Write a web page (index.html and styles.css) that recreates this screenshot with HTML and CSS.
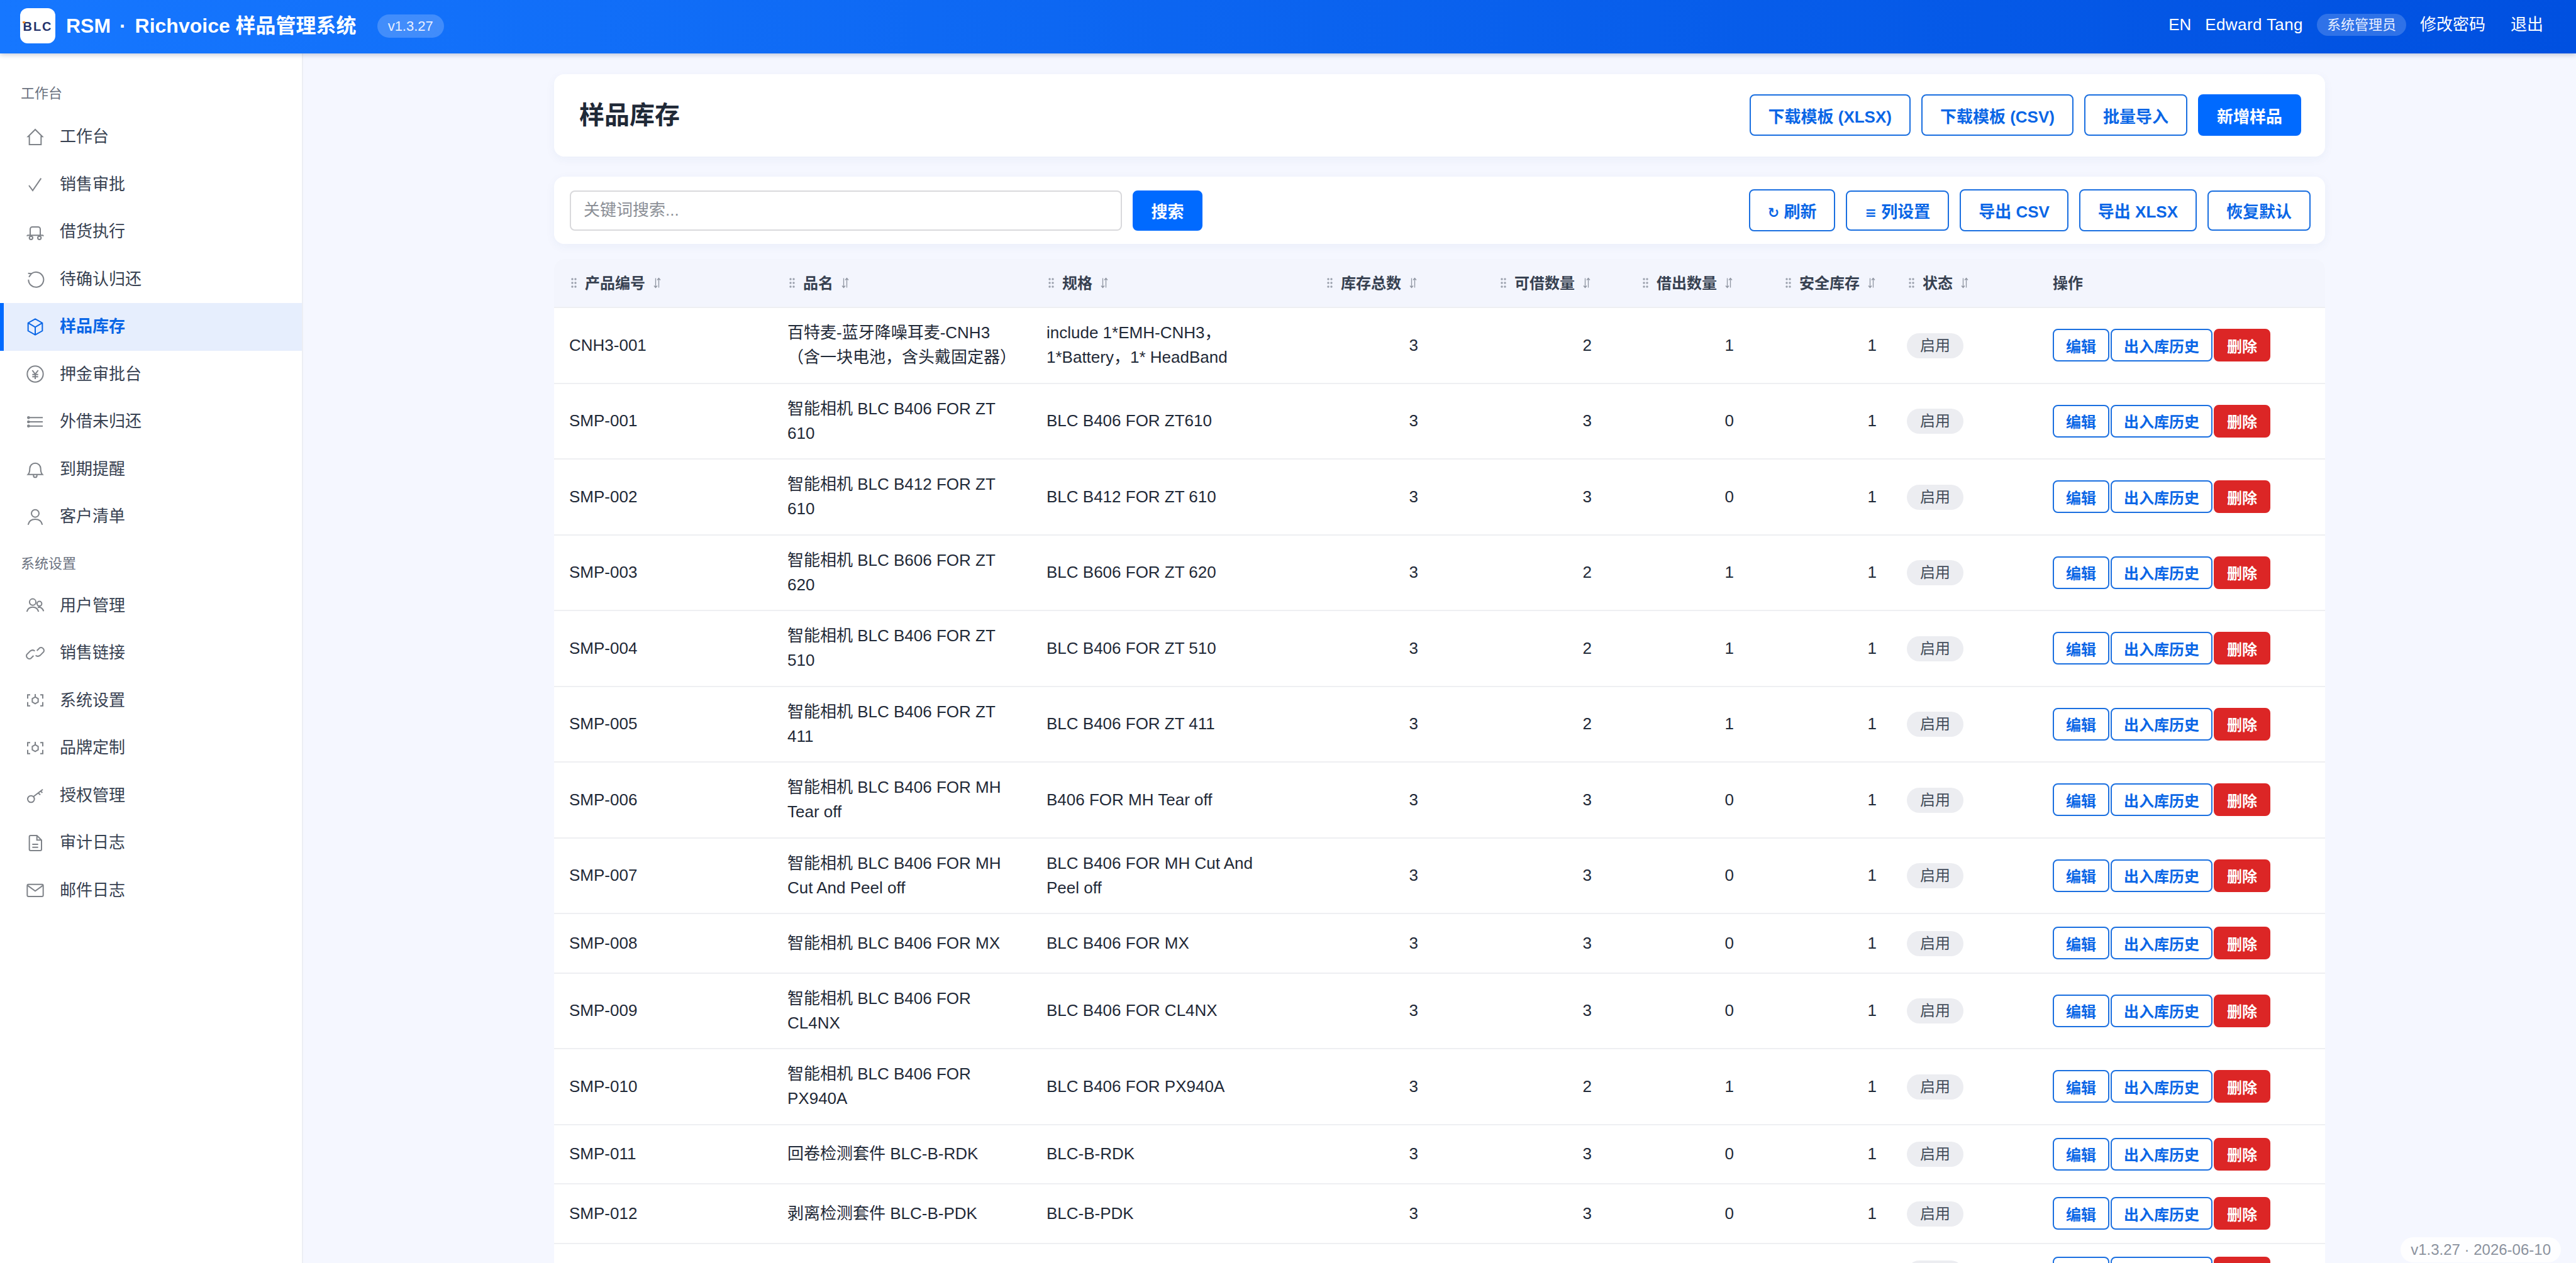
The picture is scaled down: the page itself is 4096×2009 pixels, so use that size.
FILE: index.html
```html
<!DOCTYPE html>
<html lang="zh-CN">
  <head>
    <meta charset="UTF-8" />
    <meta name="viewport" content="width=device-width, initial-scale=1.0" />
    <title>样品库存 - RSM · Richvoice 样品管理系统</title>
    <link rel="stylesheet" href="styles.css">
  </head>
  <body>
    <svg class="icon-defs" aria-hidden="true">
      <symbol id="handle" viewBox="0 0 12 18">
        <circle cx="5" cy="3" r="1.7" /><circle cx="10" cy="3" r="1.7" />
        <circle cx="5" cy="9" r="1.7" /><circle cx="10" cy="9" r="1.7" />
        <circle cx="5" cy="15" r="1.7" /><circle cx="10" cy="15" r="1.7" />
      </symbol>
      <symbol id="sort" viewBox="0 0 12 18">
        <path d="M3.5 1.5V16.5M1 13.5L3.5 16.5L6 13.5M8.5 16.5V1.5M6 4.5L8.5 1.5L11 4.5" fill="none" stroke="currentColor" stroke-width="1.3" />
      </symbol>
      <symbol id="scan" viewBox="0 0 24 24">
        <path d="M6 5.500H3V10M3 14V18.500H6M18 5.500H21V10M21 14V18.500H18M12 8L15.500 10V14L12 16L8.500 14V10L12 8ZM12 8V4.500" />
      </symbol>
    </svg>

    <header class="topbar">
      <div class="brand">
        <span class="brand-logo">BLC</span>
        <span class="brand-title">RSM <span class="brand-dot">·</span> Richvoice 样品管理系统</span>
        <span class="brand-version">v1.3.27</span>
      </div>
      <div class="topbar-user">
        <span>EN</span>
        <span class="user-name">Edward Tang</span>
        <span class="role-pill">系统管理员</span>
        <span>修改密码</span>
        <span class="logout">退出</span>
      </div>
    </header>

    <div class="shell">
      <aside class="sidebar">
        <div class="nav-label">工作台</div>
        <a class="nav-item"><svg class="nav-icon" viewBox="0 0 24 24"><path d="M12 3L3.5 11.500H5V21H19V11.500H20.500L12 3Z" /></svg>工作台</a>
        <a class="nav-item"><svg class="nav-icon" viewBox="0 0 24 24"><path d="M4.500 13.500L9 19.500L19 5" /></svg>销售审批</a>
        <a class="nav-item"><svg class="nav-icon" viewBox="0 0 24 24"><path d="M6 16V8.500A2.500 2.500 0 0 1 8.500 6H15.500A2.500 2.500 0 0 1 18 8.500V16M2.500 16H21.500M2.500 16V17M21.500 16V17" /><circle cx="7" cy="19" r="2" /><circle cx="17" cy="19" r="2" /></svg>借货执行</a>
        <a class="nav-item"><svg class="nav-icon" viewBox="0 0 24 24"><path d="M7.500 5.500A9 9 0 1 1 4 12.500M4.500 9.500L7.500 5.500L3.500 5" /></svg>待确认归还</a>
        <a class="nav-item active"><svg class="nav-icon" viewBox="0 0 24 24"><path d="M12 2.500L20.500 7.300V16.700L12 21.500L3.500 16.700V7.300L12 2.500ZM3.500 7.300L12 12.200L20.500 7.300M12 12.200V21.500" /></svg>样品库存</a>
        <a class="nav-item"><svg class="nav-icon" viewBox="0 0 24 24"><circle cx="12" cy="12" r="9.500" /><path d="M8.500 7.500L12 12L15.500 7.500M12 12V18M8.500 12.500H15.500M8.500 15.200H15.500" /></svg>押金审批台</a>
        <a class="nav-item"><svg class="nav-icon" viewBox="0 0 24 24"><path d="M4 7H21M4 12H21M4 17H21" /><circle cx="4" cy="7" r="1" /><circle cx="4" cy="12" r="1" /><circle cx="4" cy="17" r="1" /></svg>外借未归还</a>
        <a class="nav-item"><svg class="nav-icon" viewBox="0 0 24 24"><path d="M3.500 18.500H20.500C18.500 16.500 18.500 14.500 18.500 11.500A6.500 6.500 0 0 0 5.500 11.500C5.500 14.500 5.500 16.500 3.500 18.500ZM10 19V20A2 2 0 0 0 14 20V19" /></svg>到期提醒</a>
        <a class="nav-item"><svg class="nav-icon" viewBox="0 0 24 24"><circle cx="12" cy="8" r="4.500" /><path d="M3.500 21.500C4.500 17 8 15 12 15C16 15 19.500 17 20.500 21.500" /></svg>客户清单</a>

        <div class="nav-label nav-label-next">系统设置</div>
        <a class="nav-item"><svg class="nav-icon" viewBox="0 0 24 24"><circle cx="9" cy="8" r="3.800" /><circle cx="17" cy="10" r="2.800" /><path d="M2 19.500C3 15.500 5.500 14 9 14C12.500 14 15 15.500 16 19.500M15 14.500C18.500 13.500 21 15.500 22 19" /></svg>用户管理</a>
        <a class="nav-item"><svg class="nav-icon" viewBox="0 0 24 24"><path d="M10 15L6.500 18.500A3.600 3.600 0 0 1 2 13.500L6 9.500C8 8 10 8 11.500 9.500M14 9L17.500 5.500A3.600 3.600 0 0 1 22 10.500L18 14.500C16 16 14 16 12.500 14.500" /></svg>销售链接</a>
        <a class="nav-item"><svg class="nav-icon"><use href="#scan" /></svg>系统设置</a>
        <a class="nav-item"><svg class="nav-icon"><use href="#scan" /></svg>品牌定制</a>
        <a class="nav-item"><svg class="nav-icon" viewBox="0 0 24 24"><circle cx="7" cy="16.500" r="4" /><path d="M10 13.500L21 5M15.500 9.200L18 11.500M18.500 7L20.500 9" /></svg>授权管理</a>
        <a class="nav-item"><svg class="nav-icon" viewBox="0 0 24 24"><path d="M5 4.500A1.500 1.500 0 0 1 6.500 3H14L19.500 8.500V19.500A1.500 1.500 0 0 1 18 21H6.500A1.500 1.500 0 0 1 5 19.500V4.500ZM14 3V8.500H19.500M8.500 13.500H15.500M8.500 17H15.500" /></svg>审计日志</a>
        <a class="nav-item"><svg class="nav-icon" viewBox="0 0 24 24"><rect x="2.500" y="5" width="19" height="14.500" rx="1.500" /><path d="M3 6.500L12 13L21 6.500" /></svg>邮件日志</a>
      </aside>

      <main class="main">
        <div class="container">
          <section class="card page-head">
            <h1>样品库存</h1>
            <div class="btn-row">
              <button class="btn">下载模板 (XLSX)</button>
              <button class="btn">下载模板 (CSV)</button>
              <button class="btn">批量导入</button>
              <button class="btn btn-primary">新增样品</button>
            </div>
          </section>

          <section class="card toolbar">
            <div class="search">
              <input type="text" class="search-input" placeholder="关键词搜索..." />
              <button class="btn btn-primary btn-search">搜索</button>
            </div>
            <div class="btn-row">
              <button class="btn"><span class="btn-glyph">↻</span> 刷新</button>
              <button class="btn btn-short"><span class="btn-glyph">≡</span> 列设置</button>
              <button class="btn">导出 CSV</button>
              <button class="btn">导出 XLSX</button>
              <button class="btn btn-short">恢复默认</button>
            </div>
          </section>

          <section class="table-card">
            <table class="stock-table">
              <colgroup>
                <col class="col-code" /><col class="col-name" /><col class="col-spec" />
                <col class="col-total" /><col class="col-free" /><col class="col-out" />
                <col class="col-safe" /><col class="col-status" /><col />
              </colgroup>
              <thead>
                <tr>
                  <th><div class="th-in"><svg class="handle"><use href="#handle" /></svg>产品编号<svg class="sort"><use href="#sort" /></svg></div></th>
                  <th><div class="th-in"><svg class="handle"><use href="#handle" /></svg>品名<svg class="sort"><use href="#sort" /></svg></div></th>
                  <th><div class="th-in"><svg class="handle"><use href="#handle" /></svg>规格<svg class="sort"><use href="#sort" /></svg></div></th>
                  <th><div class="th-in th-num"><svg class="handle"><use href="#handle" /></svg>库存总数<svg class="sort"><use href="#sort" /></svg></div></th>
                  <th><div class="th-in th-num"><svg class="handle"><use href="#handle" /></svg>可借数量<svg class="sort"><use href="#sort" /></svg></div></th>
                  <th><div class="th-in th-num"><svg class="handle"><use href="#handle" /></svg>借出数量<svg class="sort"><use href="#sort" /></svg></div></th>
                  <th><div class="th-in th-num"><svg class="handle"><use href="#handle" /></svg>安全库存<svg class="sort"><use href="#sort" /></svg></div></th>
                  <th><div class="th-in"><svg class="handle"><use href="#handle" /></svg>状态<svg class="sort"><use href="#sort" /></svg></div></th>
                  <th>操作</th>
                </tr>
              </thead>
              <tbody>
                <tr><td>CNH3-001</td><td>百特麦-蓝牙降噪耳麦-CNH3（含一块电池，含头戴固定器）</td><td>include 1*EMH-CNH3， 1*Battery，1* HeadBand</td><td class="num">3</td><td class="num">2</td><td class="num">1</td><td class="num">1</td><td><span class="pill">启用</span></td><td><div class="actions"><button class="act">编辑</button><button class="act">出入库历史</button><button class="act act-del">删除</button></div></td></tr>
                <tr><td>SMP-001</td><td>智能相机 BLC B406 FOR ZT 610</td><td>BLC B406 FOR ZT610</td><td class="num">3</td><td class="num">3</td><td class="num">0</td><td class="num">1</td><td><span class="pill">启用</span></td><td><div class="actions"><button class="act">编辑</button><button class="act">出入库历史</button><button class="act act-del">删除</button></div></td></tr>
                <tr><td>SMP-002</td><td>智能相机 BLC B412 FOR ZT 610</td><td>BLC B412 FOR ZT 610</td><td class="num">3</td><td class="num">3</td><td class="num">0</td><td class="num">1</td><td><span class="pill">启用</span></td><td><div class="actions"><button class="act">编辑</button><button class="act">出入库历史</button><button class="act act-del">删除</button></div></td></tr>
                <tr><td>SMP-003</td><td>智能相机 BLC B606 FOR ZT 620</td><td>BLC B606 FOR ZT 620</td><td class="num">3</td><td class="num">2</td><td class="num">1</td><td class="num">1</td><td><span class="pill">启用</span></td><td><div class="actions"><button class="act">编辑</button><button class="act">出入库历史</button><button class="act act-del">删除</button></div></td></tr>
                <tr><td>SMP-004</td><td>智能相机 BLC B406 FOR ZT 510</td><td>BLC B406 FOR ZT 510</td><td class="num">3</td><td class="num">2</td><td class="num">1</td><td class="num">1</td><td><span class="pill">启用</span></td><td><div class="actions"><button class="act">编辑</button><button class="act">出入库历史</button><button class="act act-del">删除</button></div></td></tr>
                <tr><td>SMP-005</td><td>智能相机 BLC B406 FOR ZT 411</td><td>BLC B406 FOR ZT 411</td><td class="num">3</td><td class="num">2</td><td class="num">1</td><td class="num">1</td><td><span class="pill">启用</span></td><td><div class="actions"><button class="act">编辑</button><button class="act">出入库历史</button><button class="act act-del">删除</button></div></td></tr>
                <tr><td>SMP-006</td><td>智能相机 BLC B406 FOR MH Tear off</td><td>B406 FOR MH Tear off</td><td class="num">3</td><td class="num">3</td><td class="num">0</td><td class="num">1</td><td><span class="pill">启用</span></td><td><div class="actions"><button class="act">编辑</button><button class="act">出入库历史</button><button class="act act-del">删除</button></div></td></tr>
                <tr><td>SMP-007</td><td>智能相机 BLC B406 FOR MH Cut And Peel off</td><td>BLC B406 FOR MH Cut And Peel off</td><td class="num">3</td><td class="num">3</td><td class="num">0</td><td class="num">1</td><td><span class="pill">启用</span></td><td><div class="actions"><button class="act">编辑</button><button class="act">出入库历史</button><button class="act act-del">删除</button></div></td></tr>
                <tr><td>SMP-008</td><td>智能相机 BLC B406 FOR MX</td><td>BLC B406 FOR MX</td><td class="num">3</td><td class="num">3</td><td class="num">0</td><td class="num">1</td><td><span class="pill">启用</span></td><td><div class="actions"><button class="act">编辑</button><button class="act">出入库历史</button><button class="act act-del">删除</button></div></td></tr>
                <tr><td>SMP-009</td><td>智能相机 BLC B406 FOR CL4NX</td><td>BLC B406 FOR CL4NX</td><td class="num">3</td><td class="num">3</td><td class="num">0</td><td class="num">1</td><td><span class="pill">启用</span></td><td><div class="actions"><button class="act">编辑</button><button class="act">出入库历史</button><button class="act act-del">删除</button></div></td></tr>
                <tr><td>SMP-010</td><td>智能相机 BLC B406 FOR PX940A</td><td>BLC B406 FOR PX940A</td><td class="num">3</td><td class="num">2</td><td class="num">1</td><td class="num">1</td><td><span class="pill">启用</span></td><td><div class="actions"><button class="act">编辑</button><button class="act">出入库历史</button><button class="act act-del">删除</button></div></td></tr>
                <tr><td>SMP-011</td><td>回卷检测套件 BLC-B-RDK</td><td>BLC-B-RDK</td><td class="num">3</td><td class="num">3</td><td class="num">0</td><td class="num">1</td><td><span class="pill">启用</span></td><td><div class="actions"><button class="act">编辑</button><button class="act">出入库历史</button><button class="act act-del">删除</button></div></td></tr>
                <tr><td>SMP-012</td><td>剥离检测套件 BLC-B-PDK</td><td>BLC-B-PDK</td><td class="num">3</td><td class="num">3</td><td class="num">0</td><td class="num">1</td><td><span class="pill">启用</span></td><td><div class="actions"><button class="act">编辑</button><button class="act">出入库历史</button><button class="act act-del">删除</button></div></td></tr>
                <tr><td></td><td></td><td></td><td class="num"></td><td class="num"></td><td class="num"></td><td class="num"></td><td><span class="pill">启用</span></td><td><div class="actions"><button class="act">编辑</button><button class="act">出入库历史</button><button class="act act-del">删除</button></div></td></tr>
              </tbody>
            </table>
          </section>
        </div>
      </main>
    </div>

    <div class="build-tag">v1.3.27 · 2026-06-10</div>
  </body>
</html>
```

FILE: styles.css
```css
* {
  box-sizing: border-box;
}

html,
body {
  height: 100%;
}

body {
  margin: 0;
  overflow: hidden;
  display: flex;
  flex-direction: column;
  font-family: "Liberation Sans", "Noto Sans CJK SC", sans-serif;
  font-size: 26px;
  line-height: 39px;
  color: #1f2937;
  background: #f5f7ff;
}

.icon-defs {
  display: none;
}

/* Top bar */
.topbar {
  flex: none;
  height: 85px;
  padding: 0 52px 3px 32px;
  display: flex;
  align-items: center;
  justify-content: space-between;
  color: #fff;
  background: linear-gradient(90deg, #1677ff, #0050e0);
  box-shadow: 0 2px 8px rgba(20, 40, 90, 0.25);
  position: relative;
  z-index: 2;
}

.brand {
  display: flex;
  align-items: center;
}

.brand-logo {
  width: 56px;
  height: 56px;
  border-radius: 12px;
  background: #fff;
  color: #24336b;
  font-size: 20px;
  font-weight: 700;
  letter-spacing: 2px;
  line-height: 58px;
  text-align: center;
  position: relative;
}

.brand-logo::before {
  content: "";
  position: absolute;
  left: 4px;
  top: 21px;
  width: 4px;
  height: 3px;
  background: #f08a24;
}

.brand-title {
  margin-left: 17px;
  font-size: 32px;
  font-weight: 600;
}

.brand-dot {
  margin: 0 5px;
}

.brand-version {
  margin-left: 33px;
  padding: 0 17px;
  height: 37px;
  line-height: 37px;
  border-radius: 19px;
  font-size: 22px;
  background: rgba(255, 255, 255, 0.2);
  color: #e8efff;
}

.topbar-user {
  display: flex;
  align-items: center;
  gap: 22px;
  margin-top: -4px;
}

.user-name {
  letter-spacing: 0.4px;
}

.role-pill {
  height: 35px;
  line-height: 35px;
  padding: 0 16px;
  border-radius: 18px;
  font-size: 22px;
  background: rgba(255, 255, 255, 0.18);
  color: #e8efff;
}

.logout {
  margin-left: 18px;
}

/* Layout */
.shell {
  flex: 1;
  min-height: 0;
  display: flex;
}

.sidebar {
  flex: none;
  width: 482px;
  padding-top: 47px;
  background: #fff;
  border-right: 2px solid #eceef4;
}

.nav-label {
  padding-left: 33px;
  margin-bottom: 15px;
  font-size: 22px;
  line-height: 33px;
  color: #6b7280;
}

.nav-label-next {
  margin-top: 20px;
  margin-bottom: 13px;
}

.nav-item {
  height: 75.5px;
  display: flex;
  align-items: center;
  gap: 23px;
  padding-left: 34px;
  border-left: 6px solid transparent;
  color: #374151;
}

.nav-item.active {
  border-left-color: #006aff;
  background: #e6eefd;
  color: #0a66e6;
  font-weight: 600;
}

.nav-icon {
  flex: none;
  width: 32px;
  height: 32px;
  fill: none;
  stroke: #7f8389;
  stroke-width: 1.5;
}

.active .nav-icon {
  stroke: #0a66e6;
}

.main {
  flex: 1;
  min-width: 0;
  padding-top: 32.5px;
}

.container {
  max-width: 2816px;
  margin: 0 auto;
}

/* Cards */
.card {
  display: flex;
  align-items: center;
  justify-content: space-between;
  background: #fff;
  border-radius: 16px;
  box-shadow: 0 4px 16px rgba(40, 70, 140, 0.05);
}

.page-head {
  height: 131px;
  padding: 0 38px 0 40px;
  margin-bottom: 32.5px;
}

.page-head h1 {
  margin: 0;
  font-size: 40px;
  font-weight: 600;
  color: #1f2937;
}

.toolbar {
  height: 107px;
  padding: 0 23px 0 25px;
  margin-bottom: 24px;
}

.btn-row {
  display: flex;
  align-items: center;
  gap: 17px;
}

.btn {
  height: 66.5px;
  padding: 0 28px;
  border: 2px solid #1a6fe0;
  border-radius: 8px;
  background: #fff;
  color: #0a66e6;
  font-family: inherit;
  font-size: 26px;
  font-weight: 600;
  white-space: nowrap;
}

.btn-short {
  height: 64px;
}

.btn-primary {
  border-color: #006aff;
  background: #006aff;
  color: #fff;
}

.btn-glyph {
  font-family: "DejaVu Sans", sans-serif;
  font-size: 22px;
  font-weight: 700;
}

.search {
  display: flex;
  align-items: center;
  gap: 17px;
}

.search-input {
  width: 878px;
  height: 64px;
  padding: 0 20px;
  border: 2px solid #d9d9dc;
  border-radius: 8px;
  font-family: inherit;
  font-size: 26px;
  color: #1f2937;
}

.search-input::placeholder {
  color: #8b8f96;
}

.btn-search {
  width: 111px;
  height: 64px;
  padding: 0;
}

/* Table */
.table-card {
  background: #fff;
  border-radius: 16px 16px 0 0;
  overflow: hidden;
}

.stock-table {
  width: 100%;
  table-layout: fixed;
  border-collapse: separate;
  border-spacing: 0;
}

.col-code { width: 347px; }
.col-name { width: 412px; }
.col-spec { width: 420px; }
.col-total { width: 219px; }
.col-free { width: 276px; }
.col-out { width: 226px; }
.col-safe { width: 227px; }
.col-status { width: 232px; }

.stock-table th {
  height: 78px;
  padding: 0 24px;
  border-bottom: 2px solid #eeeff2;
  background: #f3f5fd;
  font-size: 24px;
  font-weight: 600;
  text-align: left;
  color: #374151;
  white-space: nowrap;
}

.th-in {
  display: flex;
  align-items: center;
  gap: 13px;
}

.th-num {
  justify-content: flex-end;
  padding-right: 2px;
}

.handle {
  flex: none;
  width: 12px;
  height: 18px;
  fill: #9aa0ac;
}

.sort {
  flex: none;
  width: 12px;
  height: 18px;
  color: #8f95a1;
}

.stock-table td {
  padding: 20.25px 24px;
  border-bottom: 2px solid #eeeff2;
  vertical-align: middle;
}

.stock-table .num {
  text-align: right;
}

.pill {
  display: inline-block;
  height: 40px;
  padding: 0 21px;
  border-radius: 20px;
  background: #ecedf1;
  color: #444d5c;
  font-size: 24px;
  line-height: 40px;
  vertical-align: middle;
}

.actions {
  display: flex;
  gap: 2px;
}

.act {
  height: 52px;
  padding: 0 19px;
  border: 2px solid #1a6fe0;
  border-radius: 8px;
  background: #fff;
  color: #0a66e6;
  font-family: inherit;
  font-size: 24px;
  font-weight: 600;
  white-space: nowrap;
}

.act-del {
  border-color: #dc2626;
  background: #dc2626;
  color: #fff;
}

.build-tag {
  position: absolute;
  right: 24px;
  bottom: 1px;
  height: 40px;
  padding: 0 16px;
  border-radius: 20px;
  background: rgba(255, 255, 255, 0.85);
  color: #8b929e;
  font-size: 24px;
  line-height: 40px;
}
```
